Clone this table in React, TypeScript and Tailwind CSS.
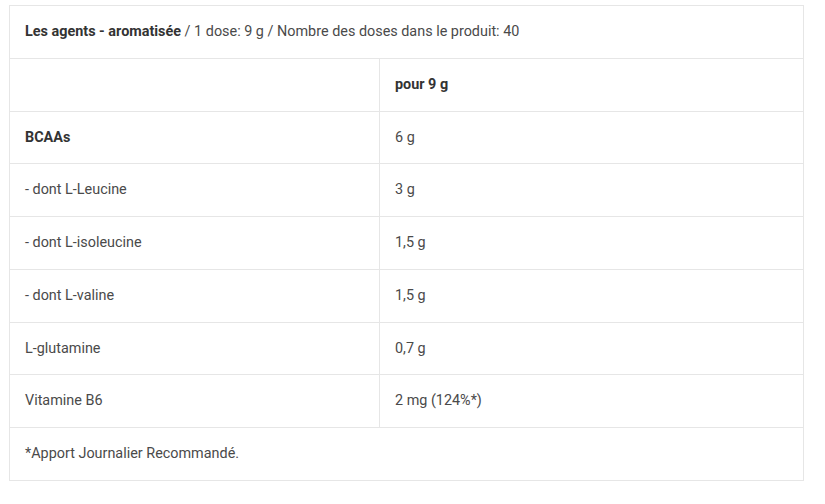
const rows: [string, string, boolean?][] = [
  ['', 'pour 9 g', true],
  ['BCAAs', '6 g'],
  ['- dont L-Leucine', '3 g'],
  ['- dont L-isoleucine', '1,5 g'],
  ['- dont L-valine', '1,5 g'],
  ['L-glutamine', '0,7 g'],
  ['Vitamine B6', '2 mg (124%*)'],
]

export default function App() {
  return (
    <div className="w-[825px] h-[504px] bg-white pt-[5px] pl-[9px] font-['Roboto',sans-serif] text-[14.4px] text-[#4a4a4a]">
      <table className="w-[795px] border-collapse">
        <tbody>
          <tr className="h-[52.75px]">
            <td colSpan={2} className="border border-[#e6e6e6] px-[15px]">
              <span className="font-bold text-[#333]">Les agents - aromatisée</span> / 1 dose: 9 g / Nombre des doses dans le produit: 40
            </td>
          </tr>
          {rows.map(([label, value, head], i) => (
            <tr key={i} className="h-[52.75px]">
              <td className={`w-[370px] border border-[#e6e6e6] px-[15px] ${label === 'BCAAs' ? 'font-bold text-[#333]' : ''}`}>
                {label}
              </td>
              <td className={`border border-[#e6e6e6] px-[15px] ${head ? 'font-bold text-[#333]' : ''}`}>{value}</td>
            </tr>
          ))}
          <tr className="h-[52.75px]">
            <td colSpan={2} className="border border-[#e6e6e6] px-[15px]">
              *Apport Journalier Recommandé.
            </td>
          </tr>
        </tbody>
      </table>
    </div>
  )
}
